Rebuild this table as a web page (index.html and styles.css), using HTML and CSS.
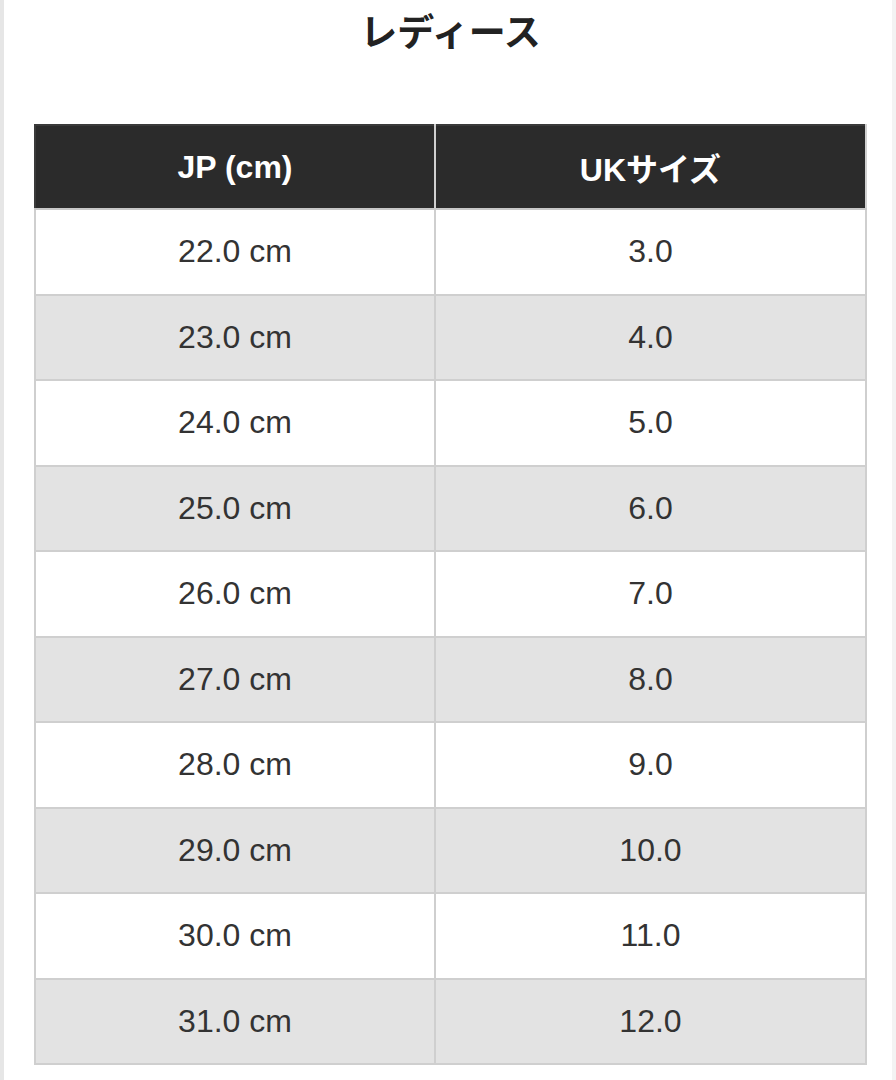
FILE: index.html
```html
<!DOCTYPE html>
<html lang="ja">
<head>
<meta charset="utf-8">
<link rel="stylesheet" href="styles.css">
</head>
<body>
<div class="page">
  <h1 class="title">レディース</h1>
  <table class="size-table">
    <colgroup><col class="col-jp"><col class="col-uk"></colgroup>
    <thead>
      <tr><th>JP (cm)</th><th>UKサイズ</th></tr>
    </thead>
    <tbody>
      <tr><td>22.0 cm</td><td>3.0</td></tr>
      <tr><td>23.0 cm</td><td>4.0</td></tr>
      <tr><td>24.0 cm</td><td>5.0</td></tr>
      <tr><td>25.0 cm</td><td>6.0</td></tr>
      <tr><td>26.0 cm</td><td>7.0</td></tr>
      <tr><td>27.0 cm</td><td>8.0</td></tr>
      <tr><td>28.0 cm</td><td>9.0</td></tr>
      <tr><td>29.0 cm</td><td>10.0</td></tr>
      <tr><td>30.0 cm</td><td>11.0</td></tr>
      <tr><td>31.0 cm</td><td>12.0</td></tr>
    </tbody>
  </table>
</div>
</body>
</html>
```

FILE: styles.css
```css
html, body {
  margin: 0;
  padding: 0;
  background: #ffffff;
}
body {
  font-family: "Liberation Sans", "Noto Sans CJK JP", sans-serif;
  color: #333333;
}
.page {
  width: 896px;
  height: 1080px;
  box-sizing: border-box;
  border-left: 4px solid #e6e6e6;
  border-right: 4px solid #f3f3f3;
  padding: 0 25px 0 30px;
}
.title {
  margin: 0;
  height: 124px;
  box-sizing: border-box;
  padding-top: 6px;
  text-align: center;
  font-family: "Noto Sans CJK JP", sans-serif;
  font-size: 37px;
  font-weight: 700;
  line-height: 48px;
  color: #222222;
}
.size-table {
  width: 100%;
  border-collapse: collapse;
  table-layout: fixed;
  border: 2px solid #cbcbcb;
}
.col-jp {
  width: 400px;
}
.size-table th,
.size-table td {
  border: 2px solid #cfcfcf;
  text-align: center;
  padding: 0;
}
.size-table th {
  background: #2b2b2b;
  color: #ffffff;
  font-size: 32px;
  font-weight: 700;
  height: 82px;
  border-color: #3a3a3a #d0d0d0 #c8c8c8 #3a3a3a;
}
.size-table th span,
.size-table th {
  letter-spacing: 0;
}
.size-table td {
  height: 83.5px;
  font-size: 32px;
  font-weight: 400;
  color: #333333;
}
.size-table tbody tr:nth-child(even) td {
  background: #e3e3e3;
}
```
